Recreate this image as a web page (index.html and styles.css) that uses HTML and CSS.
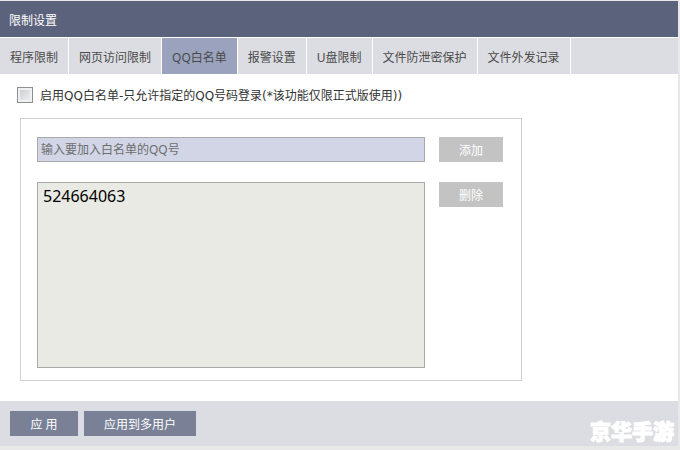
FILE: index.html
```html
<!DOCTYPE html>
<html lang="zh-CN">
<head>
  <meta charset="UTF-8" />
  <meta name="viewport" content="width=device-width, initial-scale=1.0" />
  <title>限制设置</title>
  <link rel="stylesheet" href="styles.css">
</head>
<body>
  <header class="title-bar">
    <h1>限制设置</h1>
  </header>

  <nav class="tabs">
    <a class="tab" href="#program">程序限制</a>
    <a class="tab" href="#web">网页访问限制</a>
    <a class="tab active" href="#qq">QQ白名单</a>
    <a class="tab" href="#alarm">报警设置</a>
    <a class="tab" href="#usb">U盘限制</a>
    <a class="tab" href="#leak">文件防泄密保护</a>
    <a class="tab" href="#outgoing">文件外发记录</a>
    <span class="tab-fill"></span>
  </nav>

  <main class="content">
    <div class="enable-row">
      <input type="checkbox" id="enableList" />
      <label for="enableList">启用QQ白名单-只允许指定的QQ号码登录(*该功能仅限正式版使用))</label>
    </div>

    <section class="list-panel">
      <div class="row">
        <input type="text" class="qq-input" id="qqInput" placeholder="输入要加入白名单的QQ号" aria-label="QQ号" />
        <button type="button" class="small-button">添加</button>
      </div>
      <div class="row">
        <select class="qq-list" id="qqList" size="8" aria-label="QQ白名单">
          <option>524664063</option>
        </select>
        <button type="button" class="small-button">删除</button>
      </div>
    </section>
  </main>

  <footer class="footer">
    <button type="button" class="apply-button">应 用</button>
    <button type="button" class="apply-button">应用到多用户</button>
    <span class="brand">京华手游</span>
  </footer>
</body>
</html>
```

FILE: styles.css
```css
* {
  box-sizing: border-box;
}

body {
  margin: 0;
  min-height: 100vh;
  display: flex;
  flex-direction: column;
  background-color: #fff;
  border: solid #e8e8e8;
  border-width: 1px 2px 4px 0;
  font-family: "Noto Sans", "Noto Sans CJK SC", sans-serif;
  font-size: 12px;
  line-height: 16px;
  color: #333;
}

button, input, select {
  font-family: inherit;
  font-size: 12px;
  line-height: 16px;
  margin: 0;
  border-radius: 0;
}

.title-bar {
  height: 36px;
  padding: 4px 9px 0;
  display: flex;
  align-items: center;
  background-color: #5b627c;
}

h1 {
  margin: 0;
  font-size: 12px;
  font-weight: normal;
  color: #fff;
}

.tabs {
  display: flex;
  gap: 1px;
  height: 37px;
  padding-top: 1px;
}

.tab {
  display: flex;
  align-items: center;
  padding: 4px 10px 0;
  background-color: #dcdde2;
  color: #4a4a4a;
  text-decoration: none;
  white-space: nowrap;
}

.tab.active {
  background-color: #9ba2bd;
}

.tab-fill {
  flex: 1;
  background-color: #dcdde2;
}

.content {
  flex: 1;
  padding: 13px 20px 20px 17px;
}

.enable-row {
  display: flex;
  align-items: center;
  gap: 7px;
  height: 16px;
}

.enable-row label {
  padding-top: 2px;
  font-family: "DejaVu Sans", "Noto Sans CJK SC", sans-serif;
}

.enable-row input {
  appearance: none;
  width: 16px;
  height: 16px;
  border: 1px solid #8e8f8f;
  background: linear-gradient(135deg, #c6cbd0, #f4f4f4);
  box-shadow: inset 0 0 0 2px #f0f0f0;
}

.enable-row input:checked {
  background: #5b627c;
}

.list-panel {
  display: flex;
  flex-direction: column;
  gap: 20px;
  max-width: 502px;
  margin: 15px 0 0 3px;
  padding: 18px 18px 12px 16px;
  border: 1px solid #d0d0d0;
}

.row {
  display: flex;
  align-items: flex-start;
  gap: 14px;
}

.qq-input, .qq-list {
  flex: 1;
  min-width: 0;
  border: 1px solid #a9a9a9;
}

.qq-input {
  height: 25px;
  padding: 0 3px;
  background-color: #d1d5e6;
}

.qq-input::placeholder {
  color: #6d6d6d;
}

.qq-list {
  height: 186px;
  padding: 2px 3px;
  background-color: #e9eae3;
  color: #000;
  font-size: 16px;
  overflow: auto;
}

.qq-list option {
  font-size: 16px;
}

.small-button, .apply-button {
  height: 25px;
  padding: 2px 0 0;
  border: none;
  color: #fff;
  cursor: pointer;
}

.small-button {
  width: 64px;
  background-color: #c3c3c3;
}

.footer {
  display: flex;
  align-items: center;
  gap: 6px;
  height: 45px;
  padding: 0 4px 0 10px;
  background-color: #dcdde2;
}

.apply-button {
  min-width: 68px;
  padding: 2px 20px 0;
  background-color: #7a8197;
}

.brand {
  margin-left: auto;
  padding-top: 14px;
  font-size: 21px;
  line-height: 24px;
  font-weight: 900;
  color: #fff;
  -webkit-text-stroke: 1px #fff;
}
```
